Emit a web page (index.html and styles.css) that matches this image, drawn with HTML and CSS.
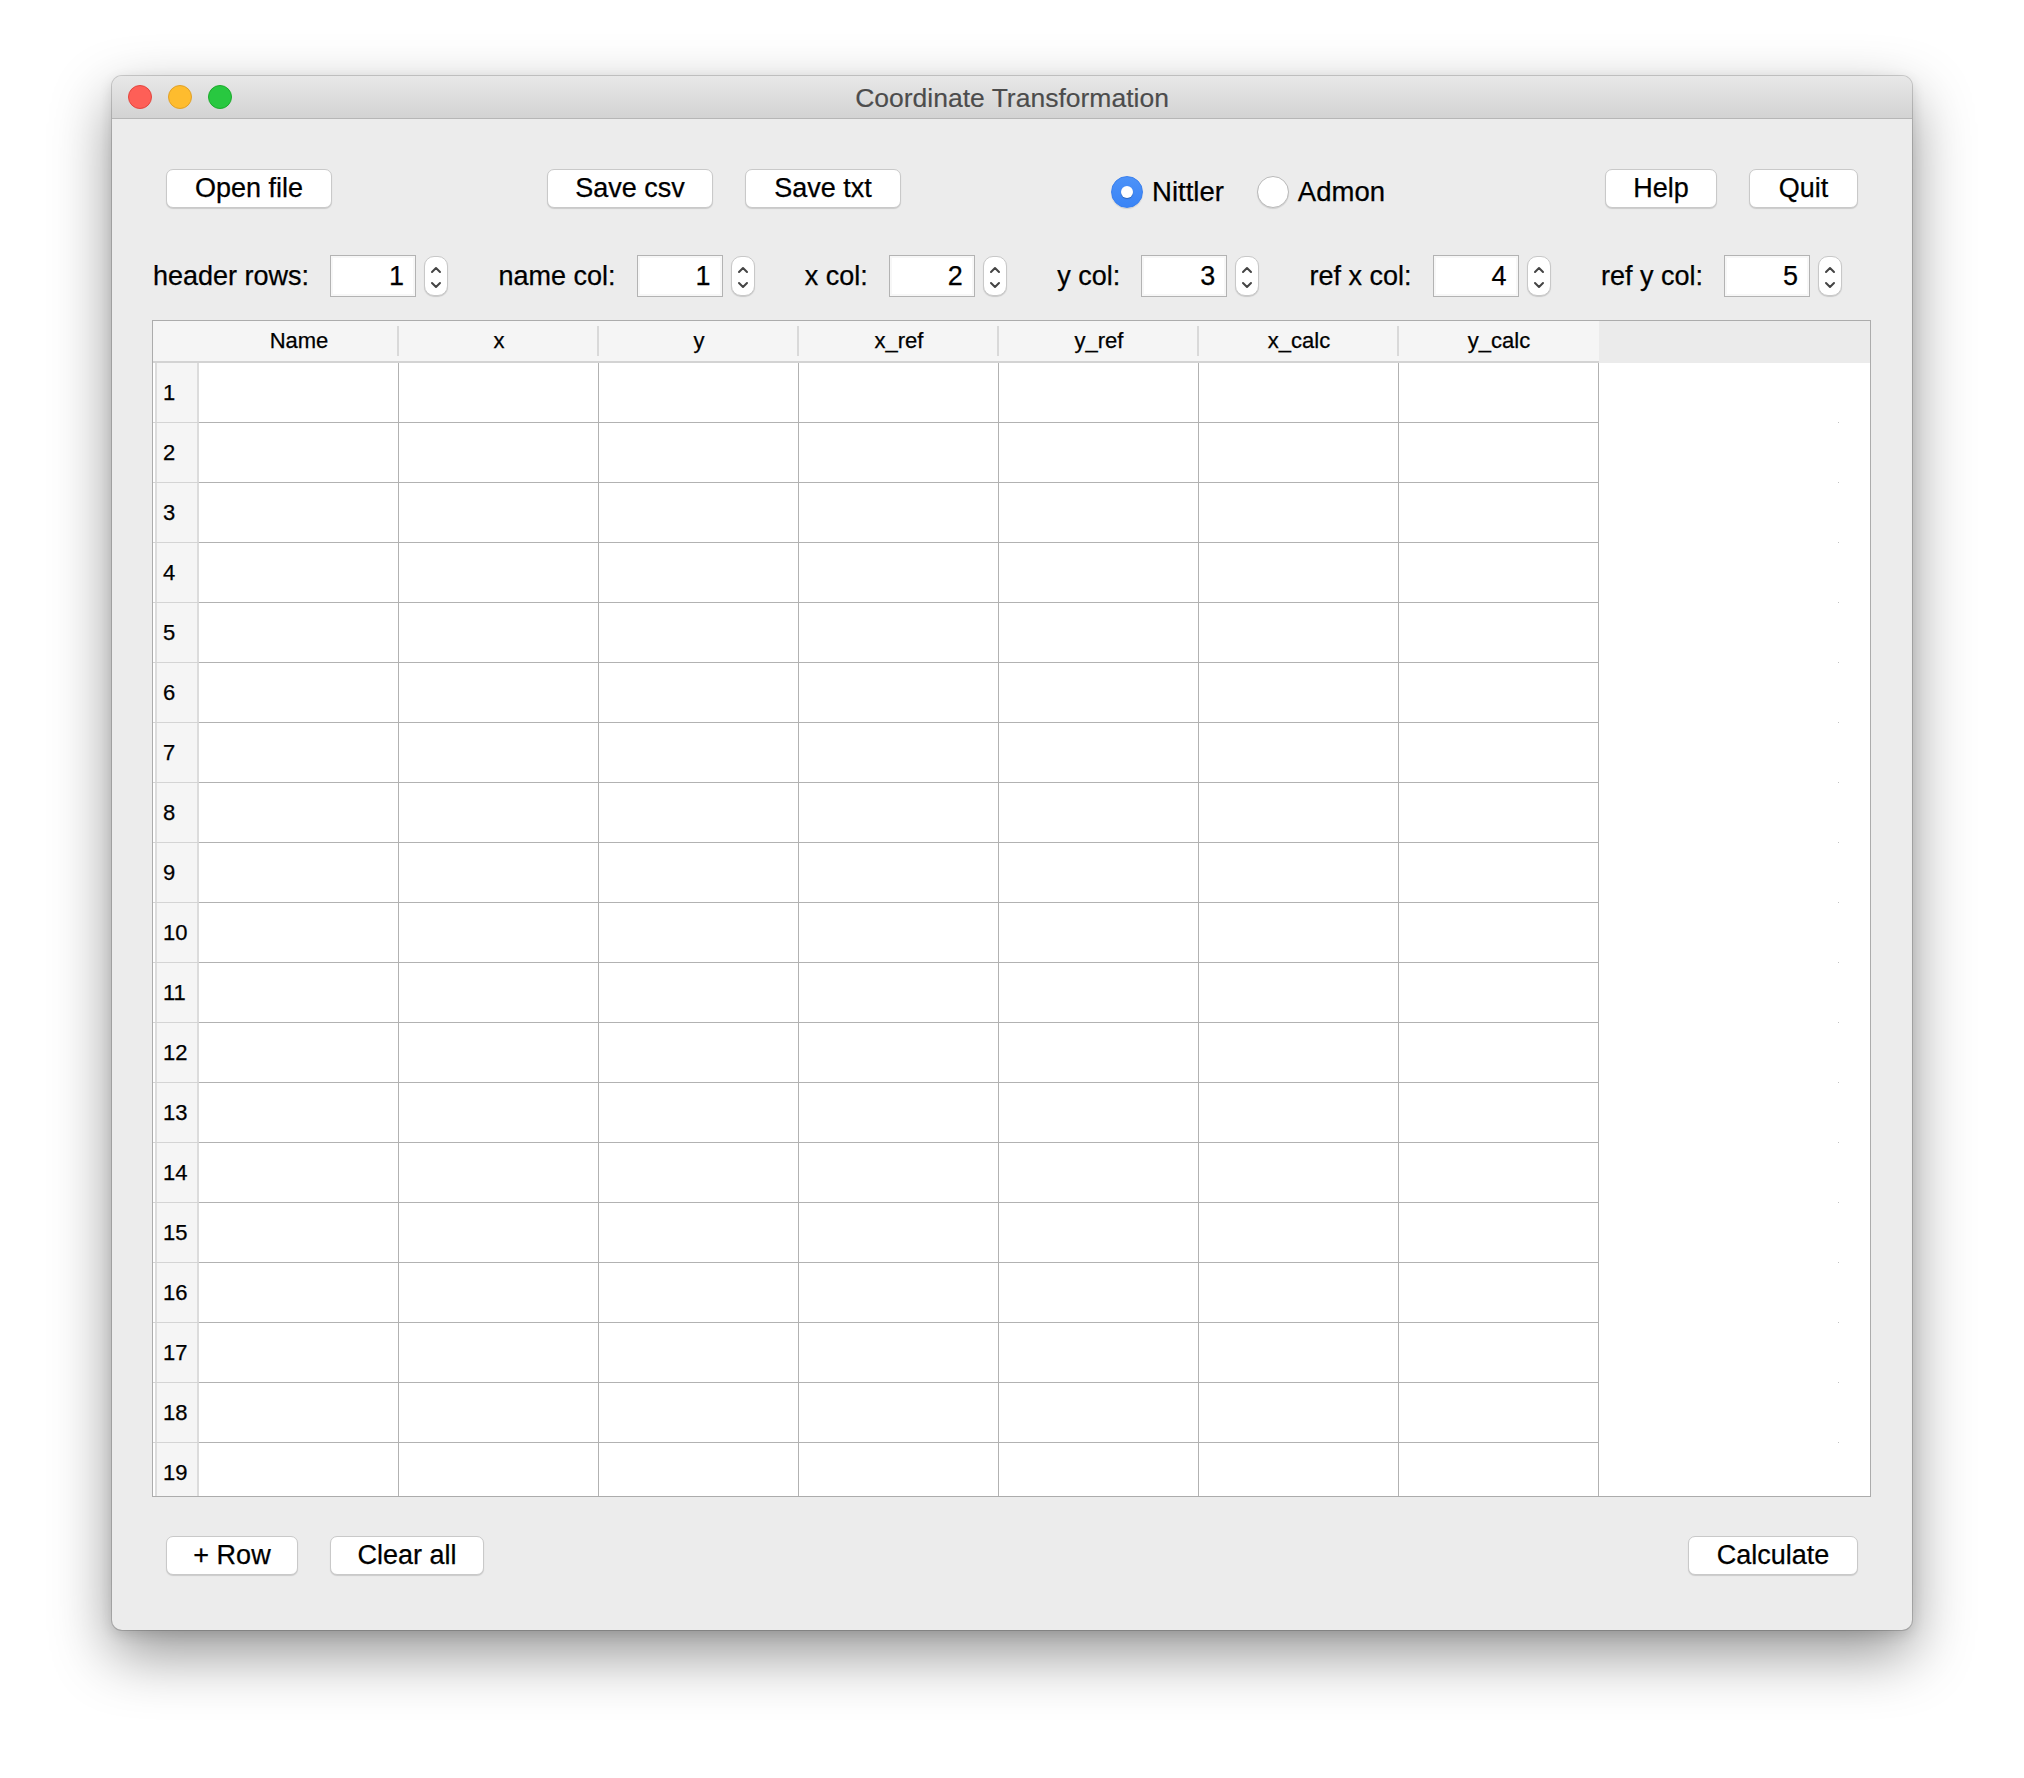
FILE: index.html
```html
<!DOCTYPE html>
<html lang="en">
<head>
<meta charset="utf-8">
<title>Coordinate Transformation</title>
<link rel="stylesheet" href="styles.css">
</head>
<body>
<div class="page">
  <div class="window">
    <div class="titlebar">
      <div class="lights">
        <span class="light red"></span><span class="light yellow"></span><span class="light green"></span>
      </div>
      <div class="title">Coordinate Transformation</div>
      <div></div>
    </div>
    <div class="content">
      <div class="toolbar">
        <button class="btn w-open">Open file</button>
        <div class="group">
          <button class="btn w-csv">Save csv</button>
          <button class="btn w-txt">Save txt</button>
        </div>
        <div class="radios">
          <label class="radio"><span class="dot on"></span>Nittler</label>
          <label class="radio"><span class="dot"></span>Admon</label>
        </div>
        <div class="group">
          <button class="btn w-help">Help</button>
          <button class="btn w-quit">Quit</button>
        </div>
      </div>

      <div class="spinrow">
        <div class="spin"><span class="spin-label">header rows:</span><span class="spin-input">1</span><span class="stepper"><svg width="24" height="40" viewBox="0 0 24 40"><path d="M8 16 L12 12 L16 16" /><path d="M8 27 L12 31 L16 27" /></svg></span></div>
        <div class="spin"><span class="spin-label">name col:</span><span class="spin-input">1</span><span class="stepper"><svg width="24" height="40" viewBox="0 0 24 40"><path d="M8 16 L12 12 L16 16" /><path d="M8 27 L12 31 L16 27" /></svg></span></div>
        <div class="spin"><span class="spin-label">x col:</span><span class="spin-input">2</span><span class="stepper"><svg width="24" height="40" viewBox="0 0 24 40"><path d="M8 16 L12 12 L16 16" /><path d="M8 27 L12 31 L16 27" /></svg></span></div>
        <div class="spin"><span class="spin-label">y col:</span><span class="spin-input">3</span><span class="stepper"><svg width="24" height="40" viewBox="0 0 24 40"><path d="M8 16 L12 12 L16 16" /><path d="M8 27 L12 31 L16 27" /></svg></span></div>
        <div class="spin"><span class="spin-label">ref x col:</span><span class="spin-input">4</span><span class="stepper"><svg width="24" height="40" viewBox="0 0 24 40"><path d="M8 16 L12 12 L16 16" /><path d="M8 27 L12 31 L16 27" /></svg></span></div>
        <div class="spin"><span class="spin-label">ref y col:</span><span class="spin-input">5</span><span class="stepper"><svg width="24" height="40" viewBox="0 0 24 40"><path d="M8 16 L12 12 L16 16" /><path d="M8 27 L12 31 L16 27" /></svg></span></div>
      </div>

      <div class="table">
        <div class="thead">
          <div class="corner"></div>
          <div class="th">Name</div>
          <div class="th">x</div>
          <div class="th">y</div>
          <div class="th">x_ref</div>
          <div class="th">y_ref</div>
          <div class="th">x_calc</div>
          <div class="th">y_calc</div>
          <div class="th-fill"></div>
        </div>
        <div class="tbody">
          <div class="tr"><div class="rh">1</div><div class="td"></div><div class="td"></div><div class="td"></div><div class="td"></div><div class="td"></div><div class="td"></div><div class="td"></div><div class="fill"></div></div>
          <div class="tr"><div class="rh">2</div><div class="td"></div><div class="td"></div><div class="td"></div><div class="td"></div><div class="td"></div><div class="td"></div><div class="td"></div><div class="fill"></div></div>
          <div class="tr"><div class="rh">3</div><div class="td"></div><div class="td"></div><div class="td"></div><div class="td"></div><div class="td"></div><div class="td"></div><div class="td"></div><div class="fill"></div></div>
          <div class="tr"><div class="rh">4</div><div class="td"></div><div class="td"></div><div class="td"></div><div class="td"></div><div class="td"></div><div class="td"></div><div class="td"></div><div class="fill"></div></div>
          <div class="tr"><div class="rh">5</div><div class="td"></div><div class="td"></div><div class="td"></div><div class="td"></div><div class="td"></div><div class="td"></div><div class="td"></div><div class="fill"></div></div>
          <div class="tr"><div class="rh">6</div><div class="td"></div><div class="td"></div><div class="td"></div><div class="td"></div><div class="td"></div><div class="td"></div><div class="td"></div><div class="fill"></div></div>
          <div class="tr"><div class="rh">7</div><div class="td"></div><div class="td"></div><div class="td"></div><div class="td"></div><div class="td"></div><div class="td"></div><div class="td"></div><div class="fill"></div></div>
          <div class="tr"><div class="rh">8</div><div class="td"></div><div class="td"></div><div class="td"></div><div class="td"></div><div class="td"></div><div class="td"></div><div class="td"></div><div class="fill"></div></div>
          <div class="tr"><div class="rh">9</div><div class="td"></div><div class="td"></div><div class="td"></div><div class="td"></div><div class="td"></div><div class="td"></div><div class="td"></div><div class="fill"></div></div>
          <div class="tr"><div class="rh">10</div><div class="td"></div><div class="td"></div><div class="td"></div><div class="td"></div><div class="td"></div><div class="td"></div><div class="td"></div><div class="fill"></div></div>
          <div class="tr"><div class="rh">11</div><div class="td"></div><div class="td"></div><div class="td"></div><div class="td"></div><div class="td"></div><div class="td"></div><div class="td"></div><div class="fill"></div></div>
          <div class="tr"><div class="rh">12</div><div class="td"></div><div class="td"></div><div class="td"></div><div class="td"></div><div class="td"></div><div class="td"></div><div class="td"></div><div class="fill"></div></div>
          <div class="tr"><div class="rh">13</div><div class="td"></div><div class="td"></div><div class="td"></div><div class="td"></div><div class="td"></div><div class="td"></div><div class="td"></div><div class="fill"></div></div>
          <div class="tr"><div class="rh">14</div><div class="td"></div><div class="td"></div><div class="td"></div><div class="td"></div><div class="td"></div><div class="td"></div><div class="td"></div><div class="fill"></div></div>
          <div class="tr"><div class="rh">15</div><div class="td"></div><div class="td"></div><div class="td"></div><div class="td"></div><div class="td"></div><div class="td"></div><div class="td"></div><div class="fill"></div></div>
          <div class="tr"><div class="rh">16</div><div class="td"></div><div class="td"></div><div class="td"></div><div class="td"></div><div class="td"></div><div class="td"></div><div class="td"></div><div class="fill"></div></div>
          <div class="tr"><div class="rh">17</div><div class="td"></div><div class="td"></div><div class="td"></div><div class="td"></div><div class="td"></div><div class="td"></div><div class="td"></div><div class="fill"></div></div>
          <div class="tr"><div class="rh">18</div><div class="td"></div><div class="td"></div><div class="td"></div><div class="td"></div><div class="td"></div><div class="td"></div><div class="td"></div><div class="fill"></div></div>
          <div class="tr"><div class="rh">19</div><div class="td"></div><div class="td"></div><div class="td"></div><div class="td"></div><div class="td"></div><div class="td"></div><div class="td"></div><div class="fill"></div></div>
        </div>
      </div>

      <div class="bottombar">
        <div class="group">
          <button class="btn w-row">+ Row</button>
          <button class="btn w-clear">Clear all</button>
        </div>
        <button class="btn w-calc">Calculate</button>
      </div>
    </div>
  </div>
</div>
</body>
</html>
```

FILE: styles.css
```css
* { box-sizing: border-box; }

html, body {
  margin: 0;
  padding: 0;
  background: #ffffff;
}

body {
  font-family: "Liberation Sans", Arial, sans-serif;
  font-size: 27px;
  color: #000;
  -webkit-text-stroke: 0.25px currentColor;
}

.page {
  padding: 76px 0 0 112px;
  width: 2024px;
  height: 1778px;
}

.window {
  width: 1800px;
  height: 1554px;
  background: #ececec;
  border-radius: 10px;
  overflow: hidden;
  box-shadow: 0 0 0 1px rgba(0, 0, 0, 0.16), 0 24px 60px rgba(0, 0, 0, 0.42), 0 4px 14px rgba(0, 0, 0, 0.12);
  display: flex;
  flex-direction: column;
}

/* ---------- title bar ---------- */
.titlebar {
  height: 43px;
  flex: none;
  display: grid;
  grid-template-columns: 1fr auto 1fr;
  align-items: center;
  background: linear-gradient(#e8e8e8, #d3d3d3);
  border-bottom: 1px solid #b6b6b6;
}

.lights {
  display: flex;
  gap: 16px;
  padding-left: 16px;
}

.light {
  width: 24px;
  height: 24px;
  border-radius: 50%;
  display: block;
}

.light.red { background: #fe5f57; border: 1px solid #e2463f; }
.light.yellow { background: #febc2e; border: 1px solid #e0a028; }
.light.green { background: #28c840; border: 1px solid #1daa2c; }

.title {
  font-size: 26.5px;
  color: #4c4c4c;
  line-height: 1;
  padding-top: 3px;
  -webkit-text-stroke: 0.15px currentColor;
}

/* ---------- content ---------- */
.content {
  flex: 1;
  display: flex;
  flex-direction: column;
}

.btn {
  height: 39px;
  padding: 0;
  font-family: inherit;
  font-size: 27px;
  color: #000;
  background: #ffffff;
  border: 1px solid #c9c9c9;
  border-radius: 7px;
  box-shadow: 0 1px 1px rgba(0, 0, 0, 0.14);
  line-height: 1;
  -webkit-text-stroke: 0.25px currentColor;
}

.w-open { width: 166px; }
.w-csv { width: 166px; }
.w-txt { width: 156px; }
.w-help { width: 112px; }
.w-quit { width: 109px; }
.w-row { width: 132px; }
.w-clear { width: 154px; }
.w-calc { width: 170px; }

.group {
  display: flex;
  gap: 32px;
}

.toolbar {
  margin: 50px 54px 0 54px;
  height: 39px;
  display: flex;
  justify-content: space-between;
  align-items: flex-start;
}

.radios {
  display: flex;
  align-items: center;
  gap: 33px;
  padding-top: 7px;
  margin-left: -5px;
  margin-right: 5px;
  font-size: 27.5px;
}

.radio {
  display: flex;
  align-items: center;
  gap: 9px;
  line-height: 32px;
}

.dot {
  width: 32px;
  height: 32px;
  border-radius: 50%;
  background: #fff;
  border: 1px solid #b9b9b9;
  box-shadow: 0 1px 1px rgba(0, 0, 0, 0.12);
  display: flex;
  align-items: center;
  justify-content: center;
}

.dot.on {
  background: linear-gradient(#4c92f8, #3a84f6);
  border-color: #3a80ee;
}

.dot.on::after {
  content: "";
  width: 12px;
  height: 12px;
  border-radius: 50%;
  background: #fff;
  box-shadow: 0 1px 1px rgba(0, 0, 0, 0.25);
}

/* ---------- spin boxes ---------- */
.spinrow {
  margin: 47px 70px 0 41px;
  height: 42px;
  display: flex;
  justify-content: space-between;
  align-items: center;
}

.spin {
  display: flex;
  align-items: center;
}

.spin-input {
  margin-left: 21px;
  width: 86px;
  height: 42px;
  background: #fff;
  border: 1px solid #b3b3b3;
  box-shadow: inset 0 0 0 2px #f7f7f7;
  text-align: right;
  padding-right: 11px;
  line-height: 40px;
}

.stepper {
  margin-left: 8px;
  width: 24px;
  height: 40px;
  background: #fff;
  border: 1px solid #c8c8c8;
  border-radius: 10px;
  box-shadow: 0 1px 1px rgba(0, 0, 0, 0.15);
  display: flex;
  align-items: center;
  justify-content: center;
  overflow: hidden;
}

.stepper svg {
  display: block;
  flex: none;
}

.stepper path {
  fill: none;
  stroke: #444;
  stroke-width: 2;
  stroke-linecap: round;
  stroke-linejoin: round;
}

/* ---------- table ---------- */
.table {
  margin: 23px 41px 0 40px;
  height: 1177px;
  border: 1px solid #acacac;
  background: #fff;
  display: flex;
  flex-direction: column;
  overflow: hidden;
}

.thead,
.tr {
  display: grid;
  grid-template-columns: 46px repeat(7, 200px) 1fr;
}

.thead {
  height: 42px;
  flex: none;
  background: #ebebeb;
  font-size: 22px;
}

.corner {
  background: #f5f5f5;
  border-bottom: 2px solid #d3d3d3;
}

.th {
  background: #f5f5f5;
  border-bottom: 2px solid #d3d3d3;
  text-align: center;
  line-height: 40px;
  position: relative;
}

.th::after {
  content: "";
  position: absolute;
  right: 0;
  top: 5px;
  bottom: 5px;
  width: 2px;
  background: #d9d9d9;
}

.th:nth-child(8)::after { display: none; }

.th-fill {
  background: #ebebeb;
}

.tbody {
  flex: 1;
  overflow: hidden;
}

.tr {
  height: 60px;
}

.rh {
  background: #f5f5f5;
  border-bottom: 1px solid #d4d4d4;
  box-shadow: inset 2px 0 0 #fff, inset 4px 0 0 #dcdcdc, inset -2px 0 0 #dcdcdc;
  font-size: 22px;
  line-height: 59px;
  padding-left: 10px;
}

.td {
  border-right: 1px solid #b2b2b2;
  border-bottom: 1px solid #b2b2b2;
}

.fill {
  background: #fff linear-gradient(#c4c4c4, #c4c4c4) no-repeat 239px 59px / 1px 1px;
}

/* ---------- bottom bar ---------- */
.bottombar {
  margin: 39px 54px 0 54px;
  display: flex;
  justify-content: space-between;
}
```
